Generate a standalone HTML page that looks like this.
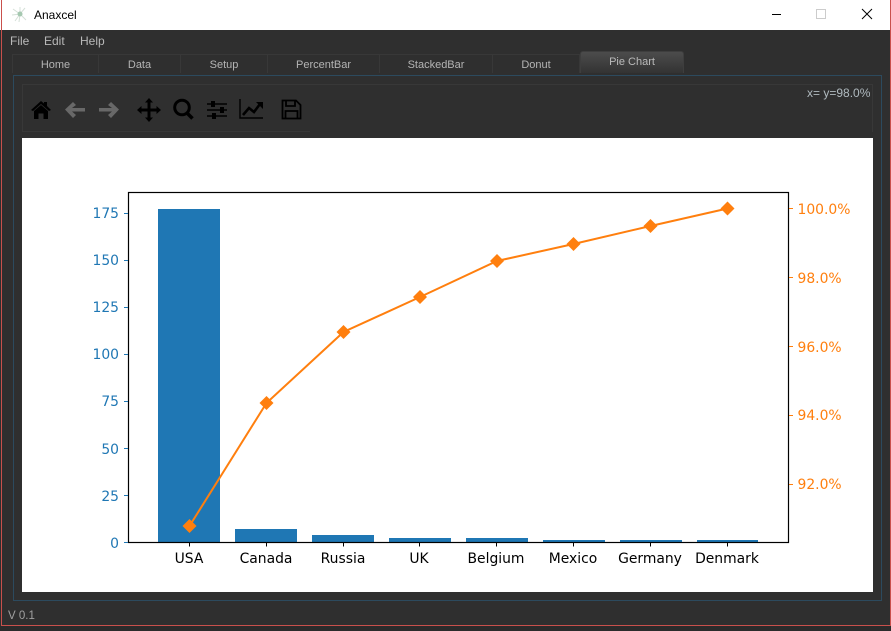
<!DOCTYPE html>
<html><head><meta charset="utf-8"><style>
html,body{margin:0;padding:0;background:#2d2d2d;}
#r{position:relative;width:891px;height:631px;overflow:hidden;background:#2f2f2f;font-family:"Liberation Sans",sans-serif;}
.a{position:absolute;}
.t{position:absolute;white-space:nowrap;color:#b8b8b8;font-size:12px;line-height:14px;}
.tab{position:absolute;top:54px;height:19px;border:1px solid #383838;border-bottom:none;border-left:none;color:#b4b4b4;font-size:11px;line-height:21px;text-align:center;box-sizing:border-box;}
</style></head><body><div id="r">
<div class="a" style="left:0;top:0;width:891px;height:30px;background:#fff"></div>
<div class="a" style="left:1px;top:0;width:1px;height:626px;background:#c9504c"></div>
<div class="a" style="left:890px;top:0;width:1px;height:626px;background:#c9504c"></div>
<div class="a" style="left:1px;top:625px;width:890px;height:1px;background:#c9504c"></div>
<div class="a" style="left:0;top:626px;width:891px;height:5px;background:#2b2b2b"></div>
<svg class="a" style="left:11px;top:6px" width="17" height="17" viewBox="0 0 17 17"><g stroke="#d5e0d8" stroke-width="1"><path d="M9 8L2 3M9 8L1 9M9 8L4 15M9 8L14 2M9 8L9 1M9 8L15 14M9 8L8 16"/></g><circle cx="9" cy="8" r="2.5" fill="#a5c8b0"/></svg>
<div class="t" style="left:34px;top:8px;color:#000;font-size:12px">Anaxcel</div>
<div class="a" style="left:772px;top:14px;width:9px;height:1px;background:#000"></div>
<div class="a" style="left:816px;top:9px;width:8px;height:8px;border:1px solid #ccc"></div>
<svg class="a" style="left:861px;top:8px" width="12" height="12"><path d="M1 1L11 11M11 1L1 11" stroke="#000" stroke-width="1" fill="none"/></svg>
<div class="t" style="left:10px;top:34px">File</div>
<div class="t" style="left:44px;top:34px">Edit</div>
<div class="t" style="left:80px;top:34px">Help</div>
<div class="tab" style="left:12px;width:87px;border-left:1px solid #383838">Home</div>
<div class="tab" style="left:99px;width:82px">Data</div>
<div class="tab" style="left:181px;width:87px">Setup</div>
<div class="tab" style="left:268px;width:112px">PercentBar</div>
<div class="tab" style="left:380px;width:113px">StackedBar</div>
<div class="tab" style="left:493px;width:87px">Donut</div>
<div class="a" style="left:580px;top:51px;width:104px;height:22px;box-sizing:border-box;border:1px solid #3e3e3e;border-bottom:none;border-radius:3px 3px 0 0;background:linear-gradient(#4c4c4c,#333);color:#bababa;font-size:11px;line-height:20px;text-align:center">Pie Chart</div>
<div class="a" style="left:13px;top:75px;width:869px;height:526px;box-sizing:border-box;border:1px solid #2c4a5e"></div>
<div class="a" style="left:22px;top:84px;width:851px;height:48px;box-sizing:border-box;border:1px solid #383838;border-bottom:none"></div>
<div class="a" style="left:22px;top:131px;width:288px;height:1px;background:#383838"></div>
<div class="t" style="left:807px;top:86px;font-size:12px;color:#b0babf">x= y=98.0%</div>
<svg class="a" style="left:30px;top:97px" width="280" height="26" viewBox="30 97 280 26">
<path d="M41 101L31 110L33 111L41 104L49 111L51 110L47 106V102H44V103.5Z" fill="#000"/>
<path d="M34 111L41 105L48 111V119H43.5V113.5H38.5V119H34Z" fill="#000"/>
<path d="M65 109.5L73 102L76 105L72 108H85V111.5H72L76 115L73 118Z" fill="#686868"/>
<path d="M119 109.5L111 102L108 105L112 108H99V111.5H112L108 115L111 118Z" fill="#686868"/>
<path d="M149 98L153 102.5H150.5V108.5H156.5V106L161 110L156.500 114V111.500H150.500V117.500H153L149 122L145 117.500H147.500V111.500H141.500V114L137 110L141.500 106V108.500H147.500V102.500H145Z" fill="#000"/>
<circle cx="182" cy="107.500" r="7.300" fill="none" stroke="#000" stroke-width="3"/>
<path d="M187 113L192.500 118.500" stroke="#000" stroke-width="3.500" fill="none"/>
<path d="M207 104H227M207 110H227M207 116H227" stroke="#000" stroke-width="1.600" fill="none"/>
<path d="M211 101h4v6h-4zM220 107h4v6h-4zM212 113h4v6h-4z" fill="#000"/>
<path d="M240 99V118H263" stroke="#000" stroke-width="1.400" fill="none"/>
<path d="M243 115L249 108L254 112L260 104" stroke="#000" stroke-width="2.600" fill="none"/>
<path d="M256 102H263V109Z" fill="#000"/>
<path d="M282.500 100.500H296L300.500 105V118.500H282.500Z" fill="none" stroke="#000" stroke-width="1.800"/>
<path d="M286 101V106H295V101" fill="none" stroke="#000" stroke-width="1.800"/>
<path d="M285.500 118V111H297.500V118" fill="none" stroke="#000" stroke-width="1.800"/>
</svg>
<svg class="a" style="left:22px;top:138px" width="851" height="454" viewBox="22 138 851 454" font-family="DejaVu Sans, sans-serif" font-size="13.9">
<rect x="22" y="138" width="851" height="454" fill="#fff"/>
<g fill="#1f77b4">
<rect x="158" y="209" width="62" height="333"/>
<rect x="235" y="529" width="62" height="13"/>
<rect x="312" y="535" width="62" height="7"/>
<rect x="389" y="538" width="62" height="4"/>
<rect x="466" y="538" width="62" height="4"/>
<rect x="543" y="540" width="62" height="2"/>
<rect x="620" y="540" width="62" height="2"/>
<rect x="697" y="540" width="61" height="2"/>
</g>
<rect x="128.500" y="192.500" width="660" height="350" fill="none" stroke="#000" stroke-width="1.200"/>
<path d="M189.500 542V546.500M266.500 542V546.500M343.500 542V546.500M419.500 542V546.500M496.500 542V546.500M573.500 542V546.500M650.500 542V546.500M727.500 542V546.500" stroke="#000"/>
<path d="M124 542.500H128M124 495.500H128M124 448.500H128M124 401.500H128M124 354.500H128M124 307.500H128M124 260.500H128M124 213.500H128" stroke="#1f77b4"/>
<path d="M789 208.500H793M789 277.500H793M789 346.500H793M789 415.500H793M789 484.500H793" stroke="#ff7f0e"/>
<g fill="#1f77b4" text-anchor="end">
<text x="119" y="548">0</text><text x="119" y="501">25</text><text x="119" y="454">50</text><text x="119" y="406">75</text><text x="119" y="359">100</text><text x="119" y="312">125</text><text x="119" y="265">150</text><text x="119" y="218">175</text>
</g>
<g fill="#ff7f0e">
<text x="797.500" y="214">100.0%</text><text x="797.500" y="283">98.0%</text><text x="797.500" y="352">96.0%</text><text x="797.500" y="420">94.0%</text><text x="797.500" y="489">92.0%</text>
</g>
<g fill="#000" text-anchor="middle">
<text x="189" y="563">USA</text><text x="266" y="563">Canada</text><text x="343" y="563">Russia</text><text x="419" y="563">UK</text><text x="496" y="563">Belgium</text><text x="573" y="563">Mexico</text><text x="650" y="563">Germany</text><text x="727" y="563">Denmark</text>
</g>
<polyline points="189.500,526 266.500,403 343.500,332 420,297 497,261 573.500,244 650.500,226 727.500,208.500" fill="none" stroke="#ff7f0e" stroke-width="2"/>
<g fill="#ff7f0e">
<path d="M189.500 519l7 7l-7 7l-7-7z"/>
<path d="M266.500 396l7 7l-7 7l-7-7z"/>
<path d="M343.500 325l7 7l-7 7l-7-7z"/>
<path d="M420 290l7 7l-7 7l-7-7z"/>
<path d="M497 254l7 7l-7 7l-7-7z"/>
<path d="M573.500 237l7 7l-7 7l-7-7z"/>
<path d="M650.500 219l7 7l-7 7l-7-7z"/>
<path d="M727.500 201.500l7 7l-7 7l-7-7z"/>
</g>
</svg>
<div class="t" style="left:8px;top:609px;font-size:11.500px;color:#a0a0a0">V 0.1</div>
</div></body></html>
